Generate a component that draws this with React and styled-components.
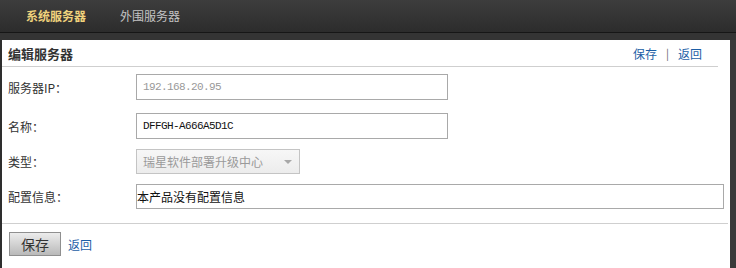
import React from "react";
import styled, { createGlobalStyle } from "styled-components";

const Global = createGlobalStyle`
  html, body { margin: 0; padding: 0; }
  body {
    width: 736px;
    height: 268px;
    overflow: hidden;
    background: #333;
    font-family: "Noto Sans CJK SC", "Liberation Sans", sans-serif;
    font-size: 12px;
    color: #333;
  }
`;

const Page = styled.div`
  display: flex;
  flex-direction: column;
  width: 736px;
  height: 268px;
  background: #343434;
`;

const TopBar = styled.div`
  height: 33px;
  display: flex;
  align-items: center;
  padding-left: 26px;
  background: linear-gradient(#3d3d3d, #2c2c2c);
  border-bottom: 1px solid #161616;
  box-sizing: border-box;
`;

const Tab = styled.span`
  flex: none;
  width: ${(p) => p.$w}px;
  font-size: 12px;
  font-weight: ${(p) => (p.$active ? 700 : 400)};
  color: ${(p) => (p.$active ? "#f0d27c" : "#c4c4c4")};
  line-height: 1;
  white-space: nowrap;
`;

const Frame = styled.div`
  flex: 1;
  margin-top: 7px;
  background: #fff;
  border-left: 2px solid #2e2e2e;
  border-right: 6px solid #3a3a3a;
  display: flex;
  flex-direction: column;
`;

const Header = styled.div`
  height: 27px;
  margin-right: 12px;
  padding: 0 16px 0 6px;
  display: flex;
  align-items: center;
  justify-content: space-between;
  border-bottom: 1px solid #cfcfcf;
  box-sizing: border-box;
`;

const Title = styled.h2`
  margin: 0;
  font-size: 13px;
  font-weight: 700;
  color: #333;
`;

const Links = styled.div`
  display: flex;
  align-items: center;
  gap: 9px;
`;

const Link = styled.a`
  color: #1c5ea6;
  text-decoration: none;
  font-size: 12px;
  cursor: pointer;
`;

const Divider = styled.span`
  color: #666;
  font-size: 11px;
`;

const Form = styled.div`
  display: flex;
  flex-direction: column;
  gap: 10px;
  padding: 7px 0 14px 6px;
  border-bottom: 1px solid #cfcfcf;
  margin-right: 2px;
`;

const Row = styled.div`
  display: flex;
  align-items: center;
  margin-bottom: ${(p) => p.$extra || 0}px;
`;

const Label = styled.label`
  width: 128px;
  flex: none;
  font-size: 12px;
  color: #333;
`;

const Input = styled.div`
  width: ${(p) => p.$w}px;
  height: ${(p) => p.$h || 26}px;
  box-sizing: border-box;
  border: 1px solid #a9a9a9;
  display: flex;
  align-items: center;
  padding-left: ${(p) => (p.$flush ? 0 : 6)}px;
  background: #fff;
  color: ${(p) => (p.$muted ? "#999" : "#111")};
  font-family: ${(p) =>
    p.$mono
      ? '"Liberation Mono", "Noto Sans CJK SC", monospace'
      : '"Noto Sans CJK SC", "Liberation Sans", sans-serif'};
  font-size: ${(p) => (p.$mono ? "11px" : "12px")};
  letter-spacing: ${(p) => (p.$mono ? "-0.6px" : "0")};
`;

const Select = styled.div`
  width: 164px;
  height: 25px;
  box-sizing: border-box;
  border: 1px solid #c4c4c4;
  background: linear-gradient(#f7f7f7, #ececec);
  display: flex;
  align-items: center;
  justify-content: space-between;
  padding: 0 7px 0 6px;
  color: #9a9a9a;
  font-size: 12px;
`;

const Arrow = styled.span`
  width: 0;
  height: 0;
  border-left: 4px solid transparent;
  border-right: 4px solid transparent;
  border-top: 4px solid #a8a8a8;
`;

const Footer = styled.div`
  display: flex;
  align-items: center;
  gap: 7px;
  padding: 8px 0 0 7px;
`;

const Button = styled.button`
  width: 52px;
  height: 24px;
  border: 1px solid #8f8f8f;
  background: linear-gradient(#ececec, #b9b9b9);
  font-family: "Noto Sans CJK SC", sans-serif;
  font-size: 14px;
  color: #333;
  padding: 0;
  line-height: 1;
`;

export default function App() {
  return (
    <>
      <Global />
      <Page>
        <TopBar>
          <Tab $active $w={94}>系统服务器</Tab>
          <Tab $w={80}>外围服务器</Tab>
        </TopBar>
        <Frame>
          <Header>
            <Title>编辑服务器</Title>
            <Links>
              <Link>保存</Link>
              <Divider>|</Divider>
              <Link>返回</Link>
            </Links>
          </Header>
          <Form>
            <Row $extra={3}>
              <Label>服务器IP：</Label>
              <Input $w={312} $mono $muted>192.168.20.95</Input>
            </Row>
            <Row>
              <Label>名称：</Label>
              <Input $w={312} $mono>DFFGH-A666A5D1C</Input>
            </Row>
            <Row>
              <Label>类型：</Label>
              <Select>
                <span>瑞星软件部署升级中心</span>
                <Arrow />
              </Select>
            </Row>
            <Row>
              <Label>配置信息：</Label>
              <Input $w={588} $h={25} $flush>本产品没有配置信息</Input>
            </Row>
          </Form>
          <Footer>
            <Button>保存</Button>
            <Link>返回</Link>
          </Footer>
        </Frame>
      </Page>
    </>
  );
}
